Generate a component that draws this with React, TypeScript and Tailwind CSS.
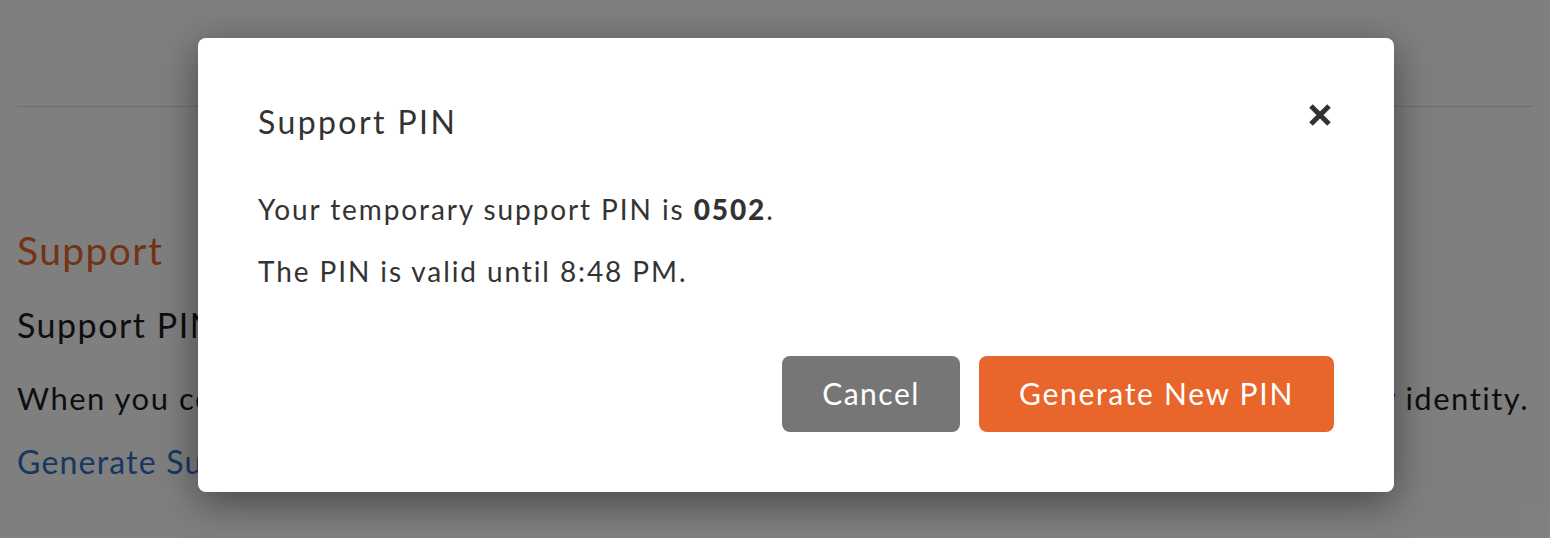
import { useState } from 'react'

const font = { fontFamily: 'Lato, "Noto Sans", sans-serif' }

export default function App() {
  const [open, setOpen] = useState(true)

  return (
    <div className="relative h-[538px] w-full overflow-hidden bg-white text-[#1c1c1c]" style={font}>
      <main className="pt-[106px] px-[17px]">
        <div className="border-t border-[#dcdcdc]" />
        <h1 className="mt-[119px] text-[39px] leading-[48px] tracking-[1.4px] text-[#e8662c]">Support</h1>
        <h2 className="mt-[29px] text-[34px] leading-[44px] tracking-[1.5px]">Support PIN</h2>
        <p className="mt-[31px] text-[31px] leading-[40px] tracking-[1.5px] whitespace-nowrap">
          When you contact our support team, you may be asked for a support PIN to help verify your identity.
        </p>
        <a href="#" className="mt-[24px] block text-[32px] leading-[40px] tracking-[1.2px] text-[#2f6fc4]">
          Generate Support PIN
        </a>
      </main>

      {open && (
        <div className="absolute inset-0 bg-black/50">
          <div className="absolute left-[198px] top-[38px] w-[1196px] h-[454px] rounded-[8px] bg-white px-[60px] shadow-[0_10px_40px_rgba(0,0,0,0.45)] text-[#333]">
            <div className="flex items-start justify-between pt-[62px]">
              <h3 className="text-[32px] leading-[44px] tracking-[2.4px]">Support PIN</h3>
              <button type="button" onClick={() => setOpen(false)} className="mt-[3px] mr-[2px]">
                <svg width="24" height="24" viewBox="0 0 24 24">
                  <path d="M3 3 L21 21 M21 3 L3 21" stroke="#333" strokeWidth="5" />
                </svg>
              </button>
            </div>
            <p className="mt-[47px] text-[28px] leading-[36px] tracking-[1.9px]">
              Your temporary support PIN is <b className="font-black">0502</b>.
            </p>
            <p className="mt-[26px] text-[28px] leading-[36px] tracking-[1.9px]">The PIN is valid until 8:48 PM.</p>
            <div className="mt-[67px] flex justify-end gap-[19px]">
              <button
                type="button"
                onClick={() => setOpen(false)}
                className="h-[76px] w-[178px] rounded-[8px] bg-[#767676] pb-[2px] text-[30px] tracking-[1.5px] text-white"
              >
                Cancel
              </button>
              <button
                type="button"
                className="h-[76px] w-[355px] rounded-[8px] bg-[#e8662c] pb-[2px] text-[30px] tracking-[1.7px] text-white"
              >
                Generate New PIN
              </button>
            </div>
          </div>
        </div>
      )}
    </div>
  )
}
